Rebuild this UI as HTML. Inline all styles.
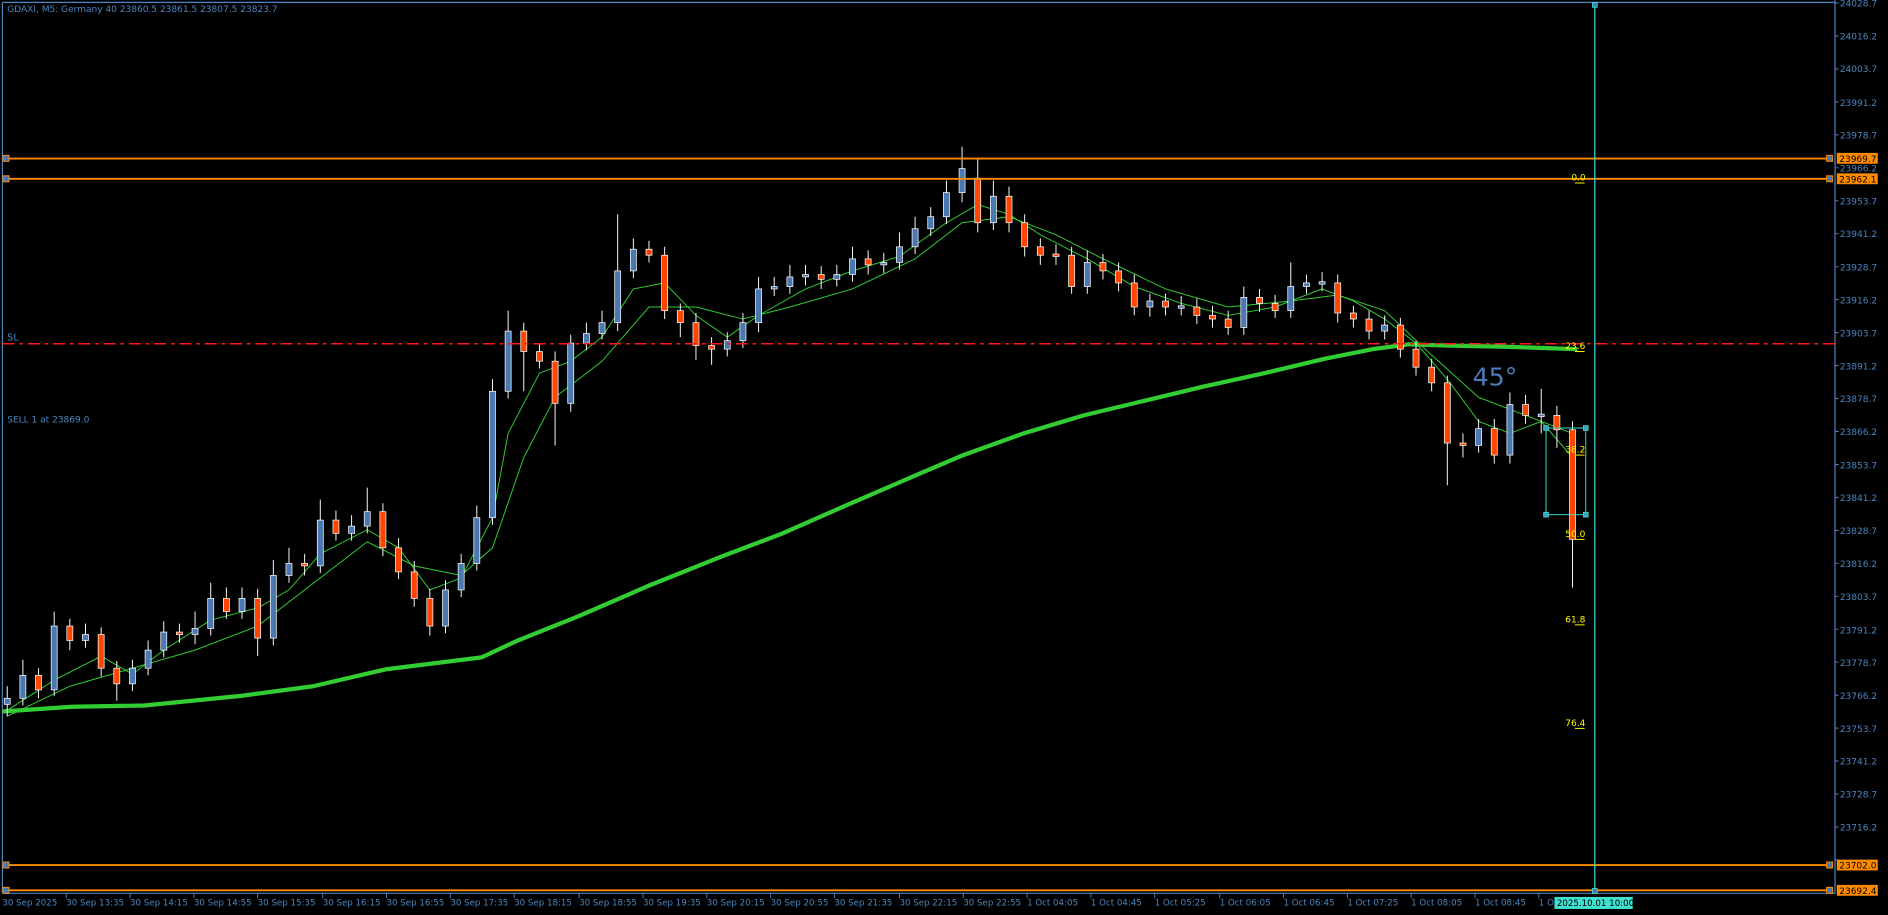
<!DOCTYPE html>
<html><head><meta charset="utf-8">
<style>
html,body{margin:0;padding:0;background:#000;overflow:hidden}
svg{display:block}
text{font-family:"DejaVu Sans","Liberation Sans",sans-serif;}
</style></head>
<body>
<svg width="1888" height="915" viewBox="0 0 1568 760" preserveAspectRatio="none" xmlns="http://www.w3.org/2000/svg">
<rect x="0" y="0" width="1568" height="760" fill="#000"/>
<line x1="2" y1="2" x2="1524" y2="2" stroke="#4a86c0" stroke-width="1"/>
<line x1="2" y1="2" x2="2" y2="742" stroke="#4a86c0" stroke-width="1"/>
<line x1="1524" y1="0" x2="1524" y2="742" stroke="#4a86c0" stroke-width="1"/>
<line x1="2" y1="742" x2="1524" y2="742" stroke="#4a86c0" stroke-width="1"/>

<path d="M2 591 L60 587 L120 586 L200 578 L260 570 L320 556 L400 546 L430 532 L480 512 L540 486 L600 462 L650 443 L700 421 L760 395 L800 378 L850 360 L900 345 L950 333 L1000 321 L1050 310 L1100 298 L1140 290 L1170 286 L1200 287 L1250 288 L1310 290" fill="none" stroke="#32cd32" stroke-width="3.5" stroke-linejoin="round"/>

<path d="M6 590 L45 565 L84 545 L110 560 L136 540 L175 515 L214 505 L240 490 L266 460 L305 440 L331 455 L357 490 L383 480 L409 430 L422 360 L448 310 L474 300 L500 280 L526 240 L552 235 L578 262 L604 280 L630 262 L669 240 L708 225 L747 213 L786 185 L812 170 L838 178 L864 195 L903 215 L942 238 L981 252 L1020 262 L1059 255 L1098 240 L1124 250 L1150 265 L1176 285 L1202 315 L1228 350 L1254 360 L1280 350 L1306 380" fill="none" stroke="#32cd32" stroke-width="0.8"/>
<path d="M6 595 L58 570 L110 555 L162 540 L214 520 L266 480 L305 450 L344 470 L383 478 L409 455 L435 380 L461 330 L500 300 L539 255 L578 255 L617 265 L656 255 L708 240 L760 215 L799 185 L838 180 L877 195 L916 215 L968 240 L1020 255 L1072 250 L1111 245 L1150 258 L1189 295 L1228 330 L1267 345 L1306 360" fill="none" stroke="#32cd32" stroke-width="0.8"/>

<!-- wicks -->
<path stroke="#fff" stroke-width="0.8" fill="none" d="
M6 570V595 M19 548V586 M32 555V580 M45 508V578 M58 514V540 M71 518V538 M84 521V562 M97 549V582 M110 548V574 M123 532V561 M136 516V546 M149 518V534 M162 508V535 M175 484V528 M188 488V514 M201 488V514 M214 489V545 M227 465V536 M240 455V484 M253 460V478 M266 415V476 M279 424V449 M292 428V449 M305 405V443 M318 418V462 M331 447V481 M344 466V504 M357 489V528 M370 482V526 M383 460V496 M396 420V474 M409 315V436 M422 258V331 M435 268V325 M448 285V306 M461 292V370 M474 278V342 M487 268V291 M500 258V282 M513 178V275 M526 198V231 M539 200V218 M552 205V265 M565 252V280 M578 260V299 M591 280V303 M604 276V296 M617 260V289 M630 230V276 M643 230V246 M656 220V244 M669 220V237 M682 221V240 M695 220V238 M708 205V234 M721 208V228 M734 210V227 M747 193V224 M760 180V211 M773 172V196 M786 150V186 M799 122V168 M812 132V193 M825 150V191 M838 155V193 M851 178V213 M864 198V220 M877 203V220 M890 205V244 M903 208V244 M916 211V232 M929 218V242 M942 228V262 M955 244V263 M968 244V262 M981 246V262 M994 248V269 M1007 254V272 M1020 258V278 M1033 238V278 M1046 240V259 M1059 245V264 M1072 218V264 M1085 228V244 M1098 226V242 M1111 228V268 M1124 254V272 M1137 258V282 M1150 262V282 M1163 264V297 M1176 283V312 M1189 298V325 M1202 312V403 M1215 360V380 M1228 348V376 M1241 348V385 M1254 326V385 M1267 328V352 M1280 323V360 M1293 337V372 M1306 350V488"/>

<!-- bull candles -->
<g fill="#4a78b0" stroke="#fff" stroke-width="0.6">
<rect x="3.5" y="580" width="5" height="5"/><rect x="16.5" y="561" width="5" height="19"/><rect x="42.5" y="520" width="5" height="53"/><rect x="68.5" y="527" width="5" height="5"/><rect x="107.5" y="555" width="5" height="13"/><rect x="120.5" y="540" width="5" height="15"/><rect x="133.5" y="525" width="5" height="15"/><rect x="159.5" y="522" width="5" height="5"/><rect x="172.5" y="497" width="5" height="25"/><rect x="198.5" y="497" width="5" height="11"/><rect x="224.5" y="478" width="5" height="52"/><rect x="237.5" y="468" width="5" height="10"/><rect x="263.5" y="432" width="5" height="38"/><rect x="289.5" y="437" width="5" height="6"/><rect x="302.5" y="425" width="5" height="12"/><rect x="367.5" y="490" width="5" height="30"/><rect x="380.5" y="468" width="5" height="22"/><rect x="393.5" y="430" width="5" height="38"/><rect x="406.5" y="325" width="5" height="105"/><rect x="419.5" y="275" width="5" height="50"/><rect x="471.5" y="285" width="5" height="50"/><rect x="484.5" y="277" width="5" height="8"/><rect x="497.5" y="268" width="5" height="9"/><rect x="510.5" y="225" width="5" height="43"/><rect x="523.5" y="207" width="5" height="18"/><rect x="601.5" y="283" width="5" height="7"/><rect x="614.5" y="268" width="5" height="15"/><rect x="627.5" y="240" width="5" height="28"/><rect x="640.5" y="238" width="5" height="2"/><rect x="653.5" y="230" width="5" height="8"/><rect x="666.5" y="228" width="5" height="2"/><rect x="692.5" y="228" width="5" height="4"/><rect x="705.5" y="215" width="5" height="13"/><rect x="731.5" y="218" width="5" height="2"/><rect x="744.5" y="205" width="5" height="13"/><rect x="757.5" y="190" width="5" height="15"/><rect x="770.5" y="180" width="5" height="10"/><rect x="783.5" y="160" width="5" height="20"/><rect x="796.5" y="140" width="5" height="20"/><rect x="822.5" y="163" width="5" height="22"/><rect x="900.5" y="218" width="5" height="20"/><rect x="952.5" y="250" width="5" height="5"/><rect x="978.5" y="254" width="5" height="2"/><rect x="1030.5" y="247" width="5" height="25"/><rect x="1069.5" y="238" width="5" height="20"/><rect x="1082.5" y="235" width="5" height="3"/><rect x="1095.5" y="234" width="5" height="2"/><rect x="1147.5" y="270" width="5" height="5"/><rect x="1225.5" y="356" width="5" height="14"/><rect x="1251.5" y="336" width="5" height="42"/><rect x="1277.5" y="344" width="5" height="2"/>
</g>
<!-- bear candles -->
<g fill="#ff4500" stroke="#fff" stroke-width="0.6">
<rect x="29.5" y="561" width="5" height="12"/><rect x="55.5" y="520" width="5" height="12"/><rect x="81.5" y="527" width="5" height="28"/><rect x="94.5" y="555" width="5" height="13"/><rect x="146.5" y="525" width="5" height="2"/><rect x="185.5" y="497" width="5" height="11"/><rect x="211.5" y="497" width="5" height="33"/><rect x="250.5" y="468" width="5" height="2"/><rect x="276.5" y="432" width="5" height="11"/><rect x="315.5" y="425" width="5" height="30"/><rect x="328.5" y="455" width="5" height="20"/><rect x="341.5" y="475" width="5" height="22"/><rect x="354.5" y="497" width="5" height="23"/><rect x="432.5" y="275" width="5" height="17"/><rect x="445.5" y="292" width="5" height="8"/><rect x="458.5" y="300" width="5" height="35"/><rect x="536.5" y="207" width="5" height="5"/><rect x="549.5" y="212" width="5" height="46"/><rect x="562.5" y="258" width="5" height="10"/><rect x="575.5" y="268" width="5" height="19"/><rect x="588.5" y="287" width="5" height="3"/><rect x="679.5" y="228" width="5" height="4"/><rect x="718.5" y="215" width="5" height="5"/><rect x="809.5" y="148" width="5" height="37"/><rect x="835.5" y="163" width="5" height="22"/><rect x="848.5" y="185" width="5" height="20"/><rect x="861.5" y="205" width="5" height="7"/><rect x="874.5" y="211" width="5" height="2"/><rect x="887.5" y="212" width="5" height="26"/><rect x="913.5" y="218" width="5" height="7"/><rect x="926.5" y="225" width="5" height="10"/><rect x="939.5" y="235" width="5" height="20"/><rect x="965.5" y="250" width="5" height="5"/><rect x="991.5" y="255" width="5" height="7"/><rect x="1004.5" y="262" width="5" height="3"/><rect x="1017.5" y="265" width="5" height="7"/><rect x="1043.5" y="247" width="5" height="5"/><rect x="1056.5" y="252" width="5" height="6"/><rect x="1108.5" y="235" width="5" height="25"/><rect x="1121.5" y="260" width="5" height="5"/><rect x="1134.5" y="265" width="5" height="10"/><rect x="1160.5" y="270" width="5" height="20"/><rect x="1173.5" y="290" width="5" height="15"/><rect x="1186.5" y="305" width="5" height="13"/><rect x="1199.5" y="318" width="5" height="50"/><rect x="1212.5" y="368" width="5" height="2"/><rect x="1238.5" y="356" width="5" height="22"/><rect x="1264.5" y="336" width="5" height="9"/><rect x="1290.5" y="345" width="5" height="12"/><rect x="1303.5" y="357" width="5" height="91"/>
</g>

<line x1="2" y1="285.5" x2="1524" y2="285.5" stroke="#ff1a1a" stroke-width="1.3" stroke-dasharray="10,4,3,4"/>
<text x="6" y="283" fill="#4a86c0" font-size="8">SL</text>
<text x="6" y="351" fill="#4a86c0" font-size="7.5">SELL 1 at 23869.0</text>
<text x="6" y="10" fill="#4a86c0" font-size="7.5">GDAXI, M5:  Germany 40  23860.5 23861.5 23807.5 23823.7</text>
<g stroke="#ff8c00" stroke-width="1.6">
<line x1="2" y1="131.7" x2="1522" y2="131.7"/>
<line x1="2" y1="148.5" x2="1522" y2="148.5"/>
<line x1="2" y1="718.5" x2="1522" y2="718.5"/>
<line x1="2" y1="739.5" x2="1522" y2="739.5"/>
</g>
<g fill="#4a78b0" stroke="#ff8c00" stroke-width="0.8">
<rect x="2.5" y="129" width="5" height="5"/><rect x="2.5" y="146" width="5" height="5"/>
<rect x="2.5" y="716" width="5" height="5"/><rect x="2.5" y="737" width="5" height="5"/>
<rect x="1517" y="129" width="5" height="5"/><rect x="1517" y="146" width="5" height="5"/>
<rect x="1517" y="716" width="5" height="5"/><rect x="1517" y="737" width="5" height="5"/>
</g>
<line x1="1324.5" y1="4" x2="1324.5" y2="742" stroke="#40e0d0" stroke-width="1"/>
<rect x="1322.5" y="2" width="4" height="4" fill="#4a78b0" stroke="#40e0d0" stroke-width="0.7"/>
<rect x="1322.5" y="738" width="4" height="4" fill="#4a78b0" stroke="#40e0d0" stroke-width="0.7"/>
<rect x="1284" y="355.5" width="33" height="72" fill="none" stroke="#40e0d0" stroke-width="0.8"/>
<g fill="#40a0c0" stroke="#40e0d0" stroke-width="0.6">
<rect x="1282" y="353.5" width="4" height="4"/><rect x="1315" y="353.5" width="4" height="4"/>
<rect x="1282" y="425.5" width="4" height="4"/><rect x="1315" y="425.5" width="4" height="4"/>
</g>
<g fill="#ffff00" font-size="7.5" stroke-width="0.8">
<text x="1305" y="150">0.0</text><line x1="1308" y1="152" x2="1316" y2="152" stroke="#ffff00"/>
<text x="1300" y="290">23.6</text><line x1="1308" y1="292" x2="1316" y2="292" stroke="#ffff00"/>
<text x="1300" y="376">38.2</text><line x1="1308" y1="378" x2="1316" y2="378" stroke="#ffff00"/>
<text x="1300" y="446">50.0</text><line x1="1308" y1="448" x2="1316" y2="448" stroke="#ffff00"/>
<text x="1300" y="517">61.8</text><line x1="1308" y1="519" x2="1316" y2="519" stroke="#ffff00"/>
<text x="1300" y="603">76.4</text><line x1="1308" y1="605" x2="1316" y2="605" stroke="#ffff00"/>
</g>
<text x="1223" y="320" fill="#4a7cb8" font-size="21">45°</text>
<g fill="#4a86c0" font-size="7.5">
<text x="1528" y="5.5">24028.7</text><text x="1528" y="33">24016.2</text><text x="1528" y="60">24003.7</text><text x="1528" y="88">23991.2</text><text x="1528" y="115">23978.7</text><text x="1528" y="142.5">23966.2</text><text x="1528" y="170">23953.7</text><text x="1528" y="197">23941.2</text><text x="1528" y="224.5">23928.7</text><text x="1528" y="252">23916.2</text><text x="1528" y="279.5">23903.7</text><text x="1528" y="307">23891.2</text><text x="1528" y="334">23878.7</text><text x="1528" y="361.5">23866.2</text><text x="1528" y="389">23853.7</text><text x="1528" y="416">23841.2</text><text x="1528" y="443.5">23828.7</text><text x="1528" y="471">23816.2</text><text x="1528" y="498.5">23803.7</text><text x="1528" y="526">23791.2</text><text x="1528" y="553">23778.7</text><text x="1528" y="580.5">23766.2</text><text x="1528" y="608">23753.7</text><text x="1528" y="635">23741.2</text><text x="1528" y="662.5">23728.7</text><text x="1528" y="690">23716.2</text>
</g>
<path stroke="#4a86c0" stroke-width="0.8" d="M1524 2.5h3M1524 29.9h3M1524 57.3h3M1524 84.6h3M1524 112h3M1524 139.4h3M1524 166.8h3M1524 194.1h3M1524 221.5h3M1524 248.9h3M1524 276.3h3M1524 303.6h3M1524 331h3M1524 358.4h3M1524 385.8h3M1524 413.1h3M1524 440.5h3M1524 467.9h3M1524 495.3h3M1524 522.6h3M1524 550h3M1524 577.4h3M1524 604.8h3M1524 632.1h3M1524 659.5h3M1524 686.9h3M1524 714.3h3"/>
<g font-size="7.5">
<rect x="1525.5" y="127" width="34" height="9" fill="#ff8c00"/><text x="1527.5" y="134.5" fill="#000">23969.7</text>
<rect x="1525.5" y="144" width="34" height="9" fill="#ff8c00"/><text x="1527.5" y="151.5" fill="#000">23962.1</text>
<rect x="1525.5" y="714" width="34" height="9" fill="#ff8c00"/><text x="1527.5" y="721.5" fill="#000">23702.0</text>
<rect x="1525.5" y="735" width="34" height="9" fill="#ff8c00"/><text x="1527.5" y="742.5" fill="#000">23692.4</text>
</g>
<path stroke="#4a86c0" stroke-width="0.8" d="M55 742v4M108 742v4M161 742v4M214 742v4M268 742v4M321 742v4M374 742v4M427 742v4M481 742v4M534 742v4M587 742v4M640 742v4M693 742v4M747 742v4M800 742v4M853 742v4M906 742v4M959 742v4M1013 742v4M1066 742v4M1119 742v4M1172 742v4M1225 742v4M1278 742v4"/>
<g fill="#4a86c0" font-size="7.2">
<text x="2" y="752">30 Sep 2025</text><text x="55" y="752">30 Sep 13:35</text><text x="108" y="752">30 Sep 14:15</text><text x="161" y="752">30 Sep 14:55</text><text x="214" y="752">30 Sep 15:35</text><text x="268" y="752">30 Sep 16:15</text><text x="321" y="752">30 Sep 16:55</text><text x="374" y="752">30 Sep 17:35</text><text x="427" y="752">30 Sep 18:15</text><text x="481" y="752">30 Sep 18:55</text><text x="534" y="752">30 Sep 19:35</text><text x="587" y="752">30 Sep 20:15</text><text x="640" y="752">30 Sep 20:55</text><text x="693" y="752">30 Sep 21:35</text><text x="747" y="752">30 Sep 22:15</text><text x="800" y="752">30 Sep 22:55</text><text x="853" y="752">1 Oct 04:05</text><text x="906" y="752">1 Oct 04:45</text><text x="959" y="752">1 Oct 05:25</text><text x="1013" y="752">1 Oct 06:05</text><text x="1066" y="752">1 Oct 06:45</text><text x="1119" y="752">1 Oct 07:25</text><text x="1172" y="752">1 Oct 08:05</text><text x="1225" y="752">1 Oct 08:45</text><text x="1278" y="752">1 O</text>
</g>
<rect x="1291" y="745" width="65" height="10" fill="#40e0d0"/>
<text x="1293" y="752.5" fill="#000" font-size="7.2">2025.10.01 10:00</text>
</svg>
</body></html>
